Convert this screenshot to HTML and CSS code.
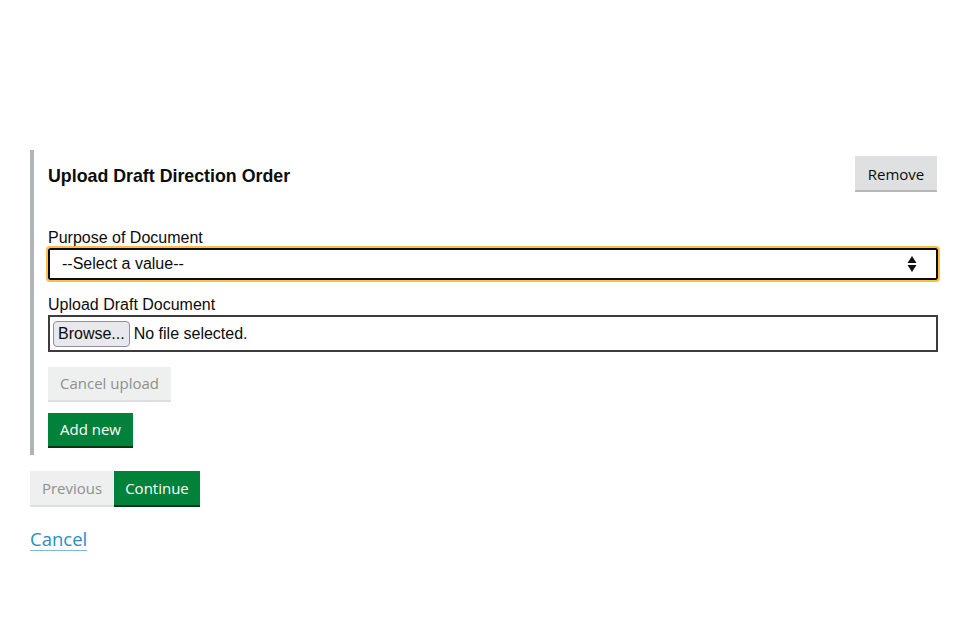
FILE: index.html
```html
<!DOCTYPE html>
<html>
<head>
<meta charset="utf-8">
<link rel="stylesheet" href="styles.css">
</head>
<body>
<main class="page">
  <section class="panel">
    <div class="panel-head">
      <h2 class="panel-title">Upload Draft Direction Order</h2>
      <button class="btn btn-grey btn-remove">Remove</button>
    </div>
    <div class="field field-first">
      <label class="label">Purpose of Document</label>
      <div class="select">
        <span class="select-text">--Select a value--</span>
        <svg class="select-arrow" width="10" height="18" viewBox="0 0 10 18"><path d="M5 1 L9.5 8 L0.5 8 Z M5 17 L9.5 10 L0.5 10 Z" fill="#111"/></svg>
      </div>
    </div>
    <div class="field">
      <label class="label">Upload Draft Document</label>
      <div class="file">
        <span class="browse">Browse...</span>
        <span class="file-text">No file selected.</span>
      </div>
    </div>
    <div class="panel-actions">
      <button class="btn btn-disabled">Cancel upload</button>
      <button class="btn btn-green">Add new</button>
    </div>
  </section>
  <div class="nav">
    <button class="btn btn-disabled btn-prev">Previous</button>
    <button class="btn btn-green">Continue</button>
  </div>
  <a class="cancel-link" href="#">Cancel</a>
</main>
</body>
</html>
```

FILE: styles.css
```css
* { box-sizing: border-box; }
html, body { margin: 0; padding: 0; background: #fff; }
body { font-family: "Liberation Sans", Arial, sans-serif; color: #0b0c0c; }
.page { padding: 150px 22px 0 30px; }
.panel {
  border-left: 4px solid #b1b4b6;
  padding: 6px 0 9px 14px;
  display: flex;
  flex-direction: column;
}
.panel-head {
  display: flex;
  justify-content: space-between;
  align-items: flex-start;
}
.panel-title {
  margin: 10px 0 0 0;
  font-size: 17.8px;
  font-weight: bold;
  line-height: 20px;
}
.btn {
  font-family: "Open Sans", sans-serif;
  font-size: 15px;
  border: 0;
  padding: 0 12px;
  height: 35px;
  line-height: 33px;
  cursor: pointer;
  display: inline-block;
}
.btn-grey {
  background: #dee0e2;
  color: #0b0c0c;
  box-shadow: 0 2px 0 #b5b7b9;
  height: 34px;
  line-height: 37px;
}
.btn-remove { margin-right: 1px; width: 82px; padding: 0; }
.btn-disabled {
  background: #eeefef;
  color: #8d8f91;
  box-shadow: 0 2px 0 #dedfe0;
  height: 33px;
}
.btn-green {
  background: #00823b;
  color: #fff;
  box-shadow: 0 2px 0 #003618;
  height: 33px;
}
.field { display: flex; flex-direction: column; }
.field-first { margin-top: 39px; }
.field + .field { margin-top: 16px; }
.label {
  font-size: 16px;
  line-height: 18px;
  margin-bottom: 1px;
}
.select {
  height: 32px;
  border: 2px solid #0b0c0c;
  outline: 2px solid #ffbf47;
  outline-offset: 0;
  border-radius: 2px;
  display: flex;
  align-items: center;
  justify-content: space-between;
  padding: 0 19px 0 12px;
  font-size: 16px;
}
.select-arrow { display: block; }
.file {
  height: 37px;
  border: 2px solid #3c3c3c;
  display: flex;
  align-items: center;
  padding: 0 3px;
  font-size: 16px;
}
.browse {
  height: 26px;
  line-height: 24px;
  border: 1px solid #8f8f9d;
  border-radius: 4px;
  background: #e9e9ed;
  padding: 0 4px;
  margin-right: 4px;
}
.panel-actions {
  margin-top: 15px;
  display: flex;
  flex-direction: column;
  align-items: flex-start;
  gap: 13px;
}
.nav { display: flex; margin-top: 16px; }
.btn-prev { width: 84px; padding: 0; height: 34px; }
.nav .btn-green { width: 86px; padding: 0; height: 34px; }
.cancel-link {
  display: inline-block;
  margin-top: 21px;
  font-family: "Open Sans", sans-serif;
  font-size: 18.5px;
  color: #2b8cc4;
  text-decoration: underline;
  text-decoration-color: #7fb6dd;
  text-underline-offset: 4px;
}
```
